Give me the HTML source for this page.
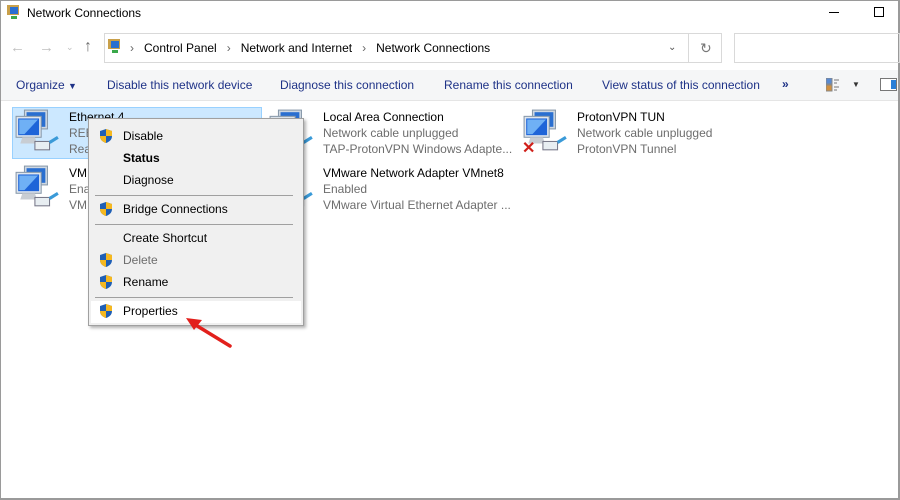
<!DOCTYPE html>
<html><head><meta charset="utf-8"><style>
*{margin:0;padding:0;box-sizing:border-box}
body{width:900px;height:500px;overflow:hidden;background:#fff;font-family:"Liberation Sans",sans-serif;font-size:12px;color:#000;position:relative}
.abs{position:absolute;white-space:nowrap}
.g{color:#6d6d6d}
.mi{position:absolute;left:34px;font-size:12px}
.sep{position:absolute;left:6px;right:10px;height:1px;background:#a0a0a0}
</style></head><body>
<svg width="0" height="0" style="position:absolute">
<defs>
<symbol id="net" viewBox="0 0 44 44">
<rect x="10" y="2" width="22" height="18" fill="#cfd8e2" stroke="#8899aa"/>
<rect x="12" y="4" width="18" height="14" fill="#2a6fd0"/>
<rect x="2" y="8" width="24" height="20" fill="#dfe6ee" stroke="#8899aa"/>
<rect x="4" y="10" width="20" height="16" fill="#1e64d8"/>
<path d="M5 11 L23 11 L10 25 L5 25Z" fill="#6fb0f5"/>
<path d="M8 28 L20 28 L22 34 L6 34Z" fill="#c8cdd3"/>
<rect x="20" y="32" width="14" height="8" fill="#e8eef2" stroke="#778"/>
<path d="M34 33 L42 28" stroke="#3a9ad8" stroke-width="3"/>
</symbol>
<symbol id="sh" viewBox="0 0 16 16">
<path d="M8 1 L14 3 L14 8 C14 12 11 14 8 15 C5 14 2 12 2 8 L2 3Z" fill="#1f5fb5"/>
<path d="M8 1 L14 3 L14 8 L8 8Z M8 8 L2 8 C2 12 5 14 8 15Z" fill="#f5b820"/>
</symbol>
</defs></svg>
<!-- borders -->
<div class="abs" style="left:0;top:0;width:900px;height:1px;background:#9a9a9a"></div>
<div class="abs" style="left:0;top:0;width:1px;height:500px;background:#9a9a9a"></div>
<div class="abs" style="left:898px;top:0;width:2px;height:500px;background:#9a9a9a"></div>
<div class="abs" style="left:0;top:498px;width:900px;height:2px;background:#9a9a9a"></div>
<!-- title -->
<svg class="abs" style="left:6px;top:4px" width="16" height="16"><rect x="1" y="1" width="12" height="10" fill="#c9a04a"/><rect x="4" y="3" width="8" height="7" fill="#2a6fd0"/><rect x="5" y="12" width="6" height="3" fill="#3aa84a"/></svg>
<div class="abs" style="left:27px;top:6px;font-size:12px">Network Connections</div>
<div class="abs" style="left:829px;top:12px;width:10px;height:1px;background:#000"></div>
<div class="abs" style="left:874px;top:7px;width:10px;height:10px;border:1px solid #000"></div>
<!-- nav -->
<div class="abs" style="left:10px;top:39px;color:#c0c0c0;font-size:15px">&#8592;</div>
<div class="abs" style="left:39px;top:39px;color:#c0c0c0;font-size:15px">&#8594;</div>
<div class="abs" style="left:66px;top:42px;color:#c0c0c0;font-size:9px">&#8964;</div>
<div class="abs" style="left:84px;top:38px;color:#707070;font-size:16px">&#8593;</div>
<div class="abs" style="left:104px;top:33px;width:618px;height:30px;border:1px solid #d9d9d9"></div>
<div class="abs" style="left:688px;top:33px;width:34px;height:30px;border:1px solid #d9d9d9"></div>
<div class="abs" style="left:700px;top:40px;color:#777;font-size:14px">&#8635;</div>
<div class="abs" style="left:668px;top:42px;color:#555;font-size:10px">&#8964;</div>
<svg class="abs" style="left:107px;top:38px" width="16" height="16"><rect x="1" y="1" width="12" height="10" fill="#c9a04a"/><rect x="4" y="3" width="8" height="7" fill="#2a6fd0"/><rect x="5" y="12" width="6" height="3" fill="#3aa84a"/></svg>
<div class="abs" style="left:130px;top:41px;font-size:12px"><span style="color:#666">&#8250;</span>&nbsp;&nbsp; Control Panel &nbsp;&nbsp;<span style="color:#666">&#8250;</span>&nbsp;&nbsp; Network and Internet &nbsp;&nbsp;<span style="color:#666">&#8250;</span>&nbsp;&nbsp; Network Connections</div>
<div class="abs" style="left:734px;top:33px;width:166px;height:30px;border:1px solid #d9d9d9"></div>
<!-- toolbar -->
<div class="abs" style="left:1px;top:70px;width:897px;height:31px;background:#f5f6f7;border-bottom:1px solid #e5e5e5"></div>
<div class="abs" style="left:16px;top:78px;color:#1e3287">Organize <span style="font-size:9px">&#9660;</span></div>
<div class="abs" style="left:107px;top:78px;color:#1e3287">Disable this network device</div>
<div class="abs" style="left:280px;top:78px;color:#1e3287">Diagnose this connection</div>
<div class="abs" style="left:444px;top:78px;color:#1e3287">Rename this connection</div>
<div class="abs" style="left:602px;top:78px;color:#1e3287">View status of this connection</div>
<div class="abs" style="left:782px;top:77px;color:#1e3287;font-weight:bold">&#187;</div>
<svg class="abs" style="left:826px;top:78px" width="16" height="14"><rect x="0" y="0" width="6" height="6" fill="#5a8ad0" stroke="#888"/><rect x="0" y="7" width="6" height="6" fill="#d09040" stroke="#888"/><path d="M8 2h5M8 5h3M8 9h5M8 12h3" stroke="#777"/></svg>
<div class="abs" style="left:852px;top:80px;font-size:8px;color:#333">&#9660;</div>
<svg class="abs" style="left:880px;top:78px" width="17" height="13"><rect x="0.5" y="0.5" width="16" height="12" fill="#fff" stroke="#777"/><rect x="11" y="2" width="5" height="9" fill="#2a7fd8"/></svg>
<!-- items -->
<div class="abs" style="left:12px;top:107px;width:250px;height:52px;background:#cce8ff;border:1px solid #99d1ff"></div>
<svg class="abs" style="left:14px;top:108px" width="46" height="46"><use href="#net"/></svg>
<div class="abs" style="left:69px;top:110px">Ethernet 4</div>
<div class="abs g" style="left:69px;top:126px">REE</div>
<div class="abs g" style="left:69px;top:142px">Rea</div>
<svg class="abs" style="left:14px;top:164px" width="46" height="46"><use href="#net"/></svg>
<div class="abs" style="left:69px;top:166px">VM</div>
<div class="abs g" style="left:69px;top:182px">Ena</div>
<div class="abs g" style="left:69px;top:198px">VM</div>

<svg class="abs" style="left:268px;top:108px" width="46" height="46"><use href="#net"/></svg>
<div class="abs" style="left:323px;top:110px">Local Area Connection</div>
<div class="abs g" style="left:323px;top:126px">Network cable unplugged</div>
<div class="abs g" style="left:323px;top:142px">TAP-ProtonVPN Windows Adapte...</div>
<svg class="abs" style="left:268px;top:164px" width="46" height="46"><use href="#net"/></svg>
<div class="abs" style="left:323px;top:166px">VMware Network Adapter VMnet8</div>
<div class="abs g" style="left:323px;top:182px">Enabled</div>
<div class="abs g" style="left:323px;top:198px">VMware Virtual Ethernet Adapter ...</div>

<svg class="abs" style="left:522px;top:108px" width="46" height="46"><use href="#net"/></svg>
<div class="abs" style="left:522px;top:138px;color:#d0201a;font-size:16px;font-weight:bold">&#10005;</div>
<div class="abs" style="left:577px;top:110px">ProtonVPN TUN</div>
<div class="abs g" style="left:577px;top:126px">Network cable unplugged</div>
<div class="abs g" style="left:577px;top:142px">ProtonVPN Tunnel</div>
<!-- context menu -->
<div class="abs" style="left:88px;top:118px;width:216px;height:208px;background:#f0f0f0;border:1px solid #a0a0a0;box-shadow:2px 2px 3px rgba(0,0,0,.3)">
<svg class="abs" style="left:9px;top:9px" width="16" height="16"><use href="#sh"/></svg>
<div class="mi" style="top:10px">Disable</div>
<div class="mi" style="top:32px;font-weight:bold">Status</div>
<div class="mi" style="top:54px">Diagnose</div>
<div class="sep" style="top:76px"></div>
<svg class="abs" style="left:9px;top:82px" width="16" height="16"><use href="#sh"/></svg>
<div class="mi" style="top:83px">Bridge Connections</div>
<div class="sep" style="top:105px"></div>
<div class="mi" style="top:112px">Create Shortcut</div>
<svg class="abs" style="left:9px;top:133px" width="16" height="16"><use href="#sh"/></svg>
<div class="mi" style="top:134px;color:#6d6d6d">Delete</div>
<svg class="abs" style="left:9px;top:155px" width="16" height="16"><use href="#sh"/></svg>
<div class="mi" style="top:156px">Rename</div>
<div class="sep" style="top:178px"></div>
<div class="abs" style="left:2px;top:182px;width:210px;height:22px;background:#fff"></div>
<svg class="abs" style="left:9px;top:184px" width="16" height="16"><use href="#sh"/></svg>
<div class="mi" style="top:185px">Properties</div>
</div>
<!-- arrow -->
<svg class="abs" style="left:180px;top:312px" width="60" height="40"><path d="M50 34 L14 12" stroke="#e2201c" stroke-width="3.5" stroke-linecap="round"/><path d="M6 6 L22 8 L14 18Z" fill="#e2201c"/></svg>
</body></html>
